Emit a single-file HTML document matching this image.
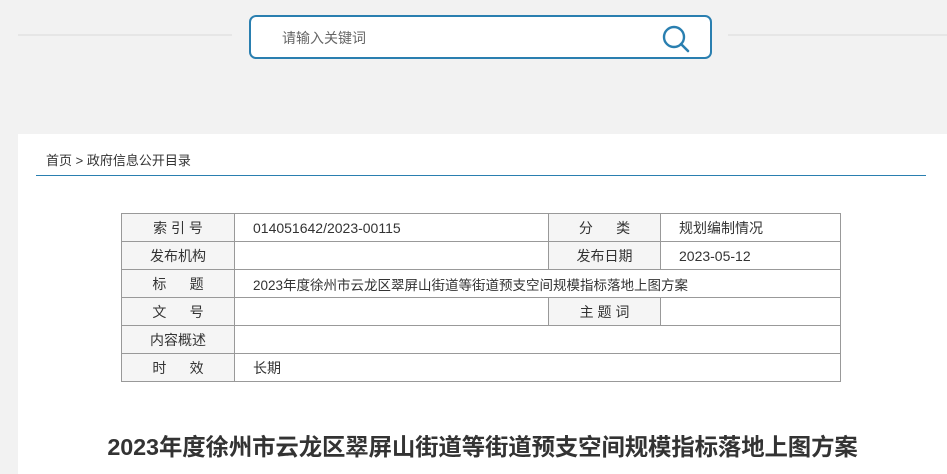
<!DOCTYPE html>
<html><head><meta charset="utf-8"><style>
body{margin:0;width:947px;height:467px;background:#f2f2f2;font-family:"Liberation Sans","Noto Sans CJK SC",sans-serif;overflow:hidden;position:relative;color:#333}
.ln{position:absolute;top:34px;height:2px;background:#e6e6e6}
.sb{position:absolute;left:249px;top:15px;width:459px;height:40px;border:2px solid #2a7fb0;border-radius:7px;background:#fff}
.sb span{position:absolute;left:31px;top:11px;font-size:14px;color:#666}
.panel{position:absolute;left:18px;top:134px;width:929px;height:340px;background:#fff}
.bc{position:absolute;left:28px;top:16px;font-size:13px;color:#333}
.bl{position:absolute;left:18px;top:41px;width:890px;height:1px;background:#2a7fb0}
table{position:absolute;left:103px;top:79px;border-collapse:collapse;font-size:14px}
td{border:1px solid #999;height:27px;padding:0;color:#333}
td.l{background:#f5f5f5;text-align:center}
td.v{padding-left:18px}
h1{position:absolute;left:0;width:929px;top:294px;margin:0;text-align:center;font-size:23.4px;font-weight:bold;color:#333;letter-spacing:-0.1px}
</style></head><body>
<div class="ln" style="left:18px;width:214px"></div>
<div class="ln" style="left:728px;width:219px"></div>
<div class="sb"><span>请输入关键词</span>
<svg style="position:absolute;left:410px;top:7px" width="30" height="30" viewBox="0 0 30 30"><circle cx="13" cy="13" r="10" fill="none" stroke="#2a7fb0" stroke-width="2.4"/><path d="M20 20L27 27" stroke="#2a7fb0" stroke-width="2.6" stroke-linecap="round"/></svg></div>
<div class="panel">
<div class="bc">首页 &gt; 政府信息公开目录</div>
<div class="bl"></div>
<table>
<tr><td class="l" style="width:112px">索 引 号</td><td class="v" style="width:295px">014051642/2023-00115</td><td class="l" style="width:111px">分&nbsp;&nbsp;&nbsp;&nbsp;&nbsp;&nbsp;类</td><td class="v" style="width:161px">规划编制情况</td></tr>
<tr><td class="l">发布机构</td><td class="v"></td><td class="l">发布日期</td><td class="v">2023-05-12</td></tr>
<tr><td class="l">标&nbsp;&nbsp;&nbsp;&nbsp;&nbsp;&nbsp;题</td><td class="v" colspan="3" style="font-size:13.5px">2023年度徐州市云龙区翠屏山街道等街道预支空间规模指标落地上图方案</td></tr>
<tr><td class="l">文&nbsp;&nbsp;&nbsp;&nbsp;&nbsp;&nbsp;号</td><td class="v"></td><td class="l">主 题 词</td><td class="v"></td></tr>
<tr><td class="l">内容概述</td><td class="v" colspan="3"></td></tr>
<tr><td class="l">时&nbsp;&nbsp;&nbsp;&nbsp;&nbsp;&nbsp;效</td><td class="v" colspan="3">长期</td></tr>
</table>
<h1>2023年度徐州市云龙区翠屏山街道等街道预支空间规模指标落地上图方案</h1>
</div>
</body></html>
